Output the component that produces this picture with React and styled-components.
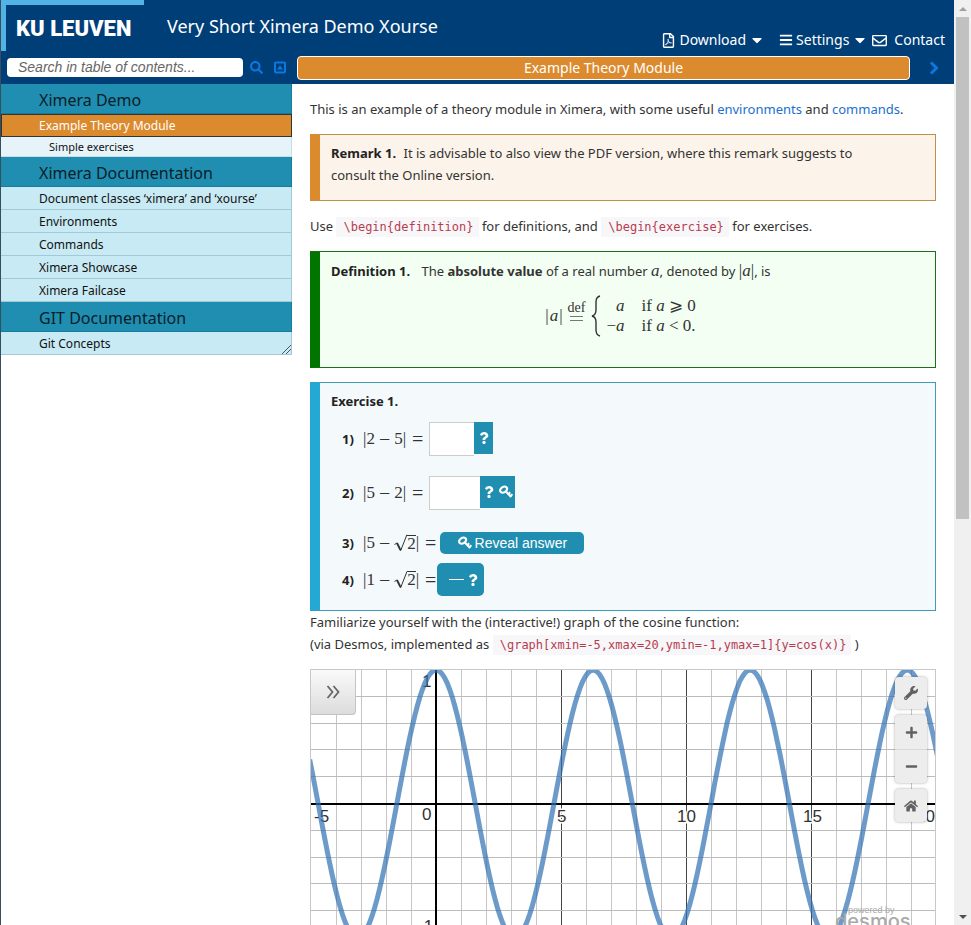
import React from "react";
import styled, { createGlobalStyle } from "styled-components";
import {
  FaRegFilePdf,
  FaBars,
  FaCaretDown,
  FaRegEnvelope,
  FaSearch,
  FaQuestion,
  FaWrench,
  FaPlus,
  FaMinus,
  FaHome,
} from "react-icons/fa";

const sans = '"Noto Sans", "Open Sans", sans-serif';
const arial = '"Liberation Sans", Arial, sans-serif';
const serif = '"Liberation Serif", "Times New Roman", serif';

const GlobalStyle = createGlobalStyle`
  * { box-sizing: border-box; }
  body { margin: 0; background: #fff; color: #333; font: 13px/22px ${sans}; }
  button { border: 0; margin: 0; padding: 0; cursor: pointer; }
  p, h1, h2, ul, ol { margin: 0; padding: 0; }
`;

const Window = styled.div`
  display: flex;
  height: 100vh;
  overflow: hidden;
  border-left: 1px solid #35505c;
`;
const Page = styled.div`
  flex: 1;
  min-width: 0;
`;
const Scrollbar = styled.div`
  width: 17px;
  flex: none;
  display: flex;
  flex-direction: column;
  align-items: center;
  justify-content: space-between;
  background: #f0f0f0;
  padding: 7px 0 6px;
`;
const Thumb = styled.div`
  width: 13px;
  flex: 0 0 55%;
  margin: 6px 0 auto;
  background: #c1c1c1;
`;
const Arrow = styled.svg`
  width: 8px;
  height: 4px;
  flex: none;
  fill: ${(p) => p.$color};
`;

const Header = styled.header`
  height: 84px;
  background: #003e78;
  color: #fff;
  display: flex;
  flex-direction: column;
`;
const TopRow = styled.div`
  height: 51px;
  display: flex;
`;
const Logo = styled.div`
  width: 143px;
  border-top: 5px solid #52b4e6;
  border-left: 5px solid #52b4e6;
  padding: 12px 0 0 10px;
  font: 900 22px/24px Roboto, sans-serif;
  white-space: nowrap;
`;
const Title = styled.h1`
  font: 400 18px/24px ${sans};
  padding: 14px 0 0 23px;
  flex: 1;
  white-space: nowrap;
`;
const Menu = styled.nav`
  display: flex;
  align-items: center;
  align-self: flex-end;
  padding-right: 9px;
  font-size: 14px;
  line-height: 22px;
`;
const MenuButton = styled.button`
  display: flex;
  align-items: center;
  gap: 3px;
  margin-right: ${(p) => p.$after}px;
  background: none;
  color: #fff;
  font: inherit;
`;
const MenuLink = styled.a`
  display: flex;
  align-items: center;
  gap: 7px;
  color: #fff;
  text-decoration: none;
`;
const BarRow = styled.div`
  display: flex;
  align-items: center;
  height: 33px;
  padding-left: 6px;
`;
const Search = styled.input`
  width: 236px;
  height: 19px;
  border: 0;
  border-radius: 4px;
  padding: 0 11px;
  font: italic 14px/19px ${arial};
  &::placeholder { color: #666; opacity: 1; }
`;
const IconButton = styled.button`
  display: flex;
  justify-content: center;
  width: 24px;
  background: none;
  color: #0a78e0;
`;
const SearchTools = styled.div`
  display: flex;
  width: 54px;
  padding-left: 1px;
`;
const Current = styled.button`
  flex: 1;
  height: 24px;
  border: 1px solid #fff;
  border-radius: 4px;
  background: #dc8a2e;
  color: #fff;
  font: 14px/20px ${sans};
`;
const NextWrap = styled.div`
  width: 44px;
  padding-left: 12px;
`;

const Body = styled.div`
  display: flex;
  align-items: flex-start;
`;
const Sidebar = styled.nav`
  position: relative;
  width: 291px;
  flex: none;
`;
const tocStyles = {
  part: { bg: "#1f8eb1", color: "#0b2029", size: 16, height: 30, line: 32, pad: 38, edge: "#177b9b" },
  active: { bg: "#dc8a2e", color: "#fff", size: 12, height: 23, line: 22, pad: 37, edge: "#333" },
  sub: { bg: "#e6f4fa", color: "#111", size: 11, height: 20, line: 20, pad: 48, edge: "#c5dfe8" },
  item: { bg: "#c8eaf4", color: "#111", size: 12, height: 23, line: 24, pad: 38, edge: "#a5c9d4" },
};
const TocLink = styled.a`
  display: block;
  height: ${(p) => tocStyles[p.$kind].height}px;
  padding-left: ${(p) => tocStyles[p.$kind].pad}px;
  background: ${(p) => tocStyles[p.$kind].bg};
  color: ${(p) => tocStyles[p.$kind].color};
  font-size: ${(p) => tocStyles[p.$kind].size}px;
  line-height: ${(p) => tocStyles[p.$kind].line}px;
  border: 0 solid ${(p) => tocStyles[p.$kind].edge};
  border-width: ${(p) => (p.$kind === "active" ? "1px" : "0 1px 1px 0")};
  text-decoration: none;
  white-space: nowrap;
`;
const Grip = styled.svg`
  position: absolute;
  right: 1px;
  bottom: 1px;
  width: 9px;
  height: 9px;
  stroke: #555;
`;

const Main = styled.main`
  flex: 1;
  min-width: 0;
  padding: 14px 18px 0;
`;
const Link = styled.a`
  color: #1b6fd0;
  text-decoration: none;
`;
const Code = styled.code`
  padding: 3px 5px 3px 7px;
  background: #f7f7f9;
  color: #b83c50;
  font: 12px/16px "DejaVu Sans Mono", monospace;
`;
const tones = {
  remark: { main: "#dc8a2e", line: "#c08e48", bg: "#fcf3ea" },
  definition: { main: "#007500", line: "#1c701c", bg: "#f2fff2" },
  exercise: { main: "#23a9d4", line: "#3c9cbc", bg: "#f4f9fc" },
};
const Box = styled.section`
  border: 1px solid ${(p) => tones[p.$tone].line};
  border-left: 10px solid ${(p) => tones[p.$tone].main};
  background: ${(p) => tones[p.$tone].bg};
  padding: ${(p) => p.$top}px 11px ${(p) => p.$bottom}px;
  margin-top: 14px;
`;
const Remark = styled.p`
  padding-right: 48px;
`;
const Lead = styled.b`
  color: #222;
  margin-right: ${(p) => p.$after || 4}px;
`;
const Para = styled.p`
  margin-top: ${(p) => p.$gap || 0}px;
`;

const Formula = styled.span`
  display: inline-flex;
  align-items: center;
  font: 17px/22px ${serif};
  color: #333;
  white-space: nowrap;
`;
const Var = styled.i`
  font-family: ${serif};
  font-size: 17px;
  line-height: 20px;
`;
const Minus = styled.span`
  margin: 0 4px;
  font-size: 20px;
`;
const Equals = styled.span`
  margin-left: 6px;
  font-size: 20px;
`;
const Display = styled.div`
  display: flex;
  justify-content: center;
  align-items: center;
  height: 44px;
  margin-top: 12px;
  padding-right: 14px;
  font: 17px/20px ${serif};
`;
const Modulus = styled.span`
  display: flex;
  gap: 1px;
`;
const DefEq = styled.span`
  display: flex;
  flex-direction: column;
  align-items: center;
  margin: 0 6px 0 5px;
  font-size: 14px;
  line-height: 10px;
  padding-bottom: 8px;
`;
const EqLines = styled.span`
  width: 13px;
  height: 5px;
  margin-top: 3px;
  border: solid #777;
  border-width: 1px 0;
`;
const Brace = styled.svg`
  width: 10px;
  height: 42px;
  margin-right: 5px;
  fill: none;
  stroke: #333;
  stroke-width: 1.4;
`;
const Cases = styled.span`
  display: grid;
  grid-template-columns: auto auto;
  column-gap: 17px;
  & > :nth-child(odd) { text-align: right; }
`;
const RadicalSvg = styled.svg`
  width: 13px;
  height: 18px;
  fill: none;
  stroke: #333;
`;
const Radicand = styled.span`
  border-top: 1px solid #333;
  line-height: 16px;
  height: 17px;
`;

const Questions = styled.ol`
  list-style: none;
  padding-left: 11px;
`;
const Question = styled.li`
  display: flex;
  align-items: center;
  height: ${(p) => p.$height}px;
`;
const Num = styled.b`
  width: 21px;
  color: #222;
`;
const AnswerGroup = styled.span`
  display: flex;
  align-items: flex-start;
  margin-left: 6px;
`;
const Answer = styled.input`
  width: ${(p) => p.$width}px;
  height: 34px;
  border: 1px solid #ccc;
  border-right: 0;
  background: #fff;
`;
const Check = styled.button`
  display: flex;
  align-items: center;
  justify-content: center;
  gap: 4px;
  width: ${(p) => p.$width}px;
  height: 32px;
  background: #1f8eb1;
  color: #fff;
`;
const RoundButton = styled(Check)`
  height: ${(p) => p.$height}px;
  margin-left: ${(p) => p.$before}px;
  padding-left: ${(p) => p.$pad || 0}px;
  border-radius: 5px;
  gap: 3px;
  font: 14px/20px ${arial};
`;
const Dash = styled.span`
  width: 15px;
  height: 1px;
  background: #fff;
`;
const KeySvg = styled.svg`
  width: 14px;
  height: 14px;
`;

const Graph = styled.figure`
  position: relative;
  margin: 14px 0 0;
  border: 1px solid #c8c8c8;
  overflow: hidden;
`;
const Plot = styled.svg`
  display: block;
  width: 100%;
  font: 17px ${arial};
`;
const Expand = styled.button`
  position: absolute;
  left: 0;
  top: 0;
  width: 45px;
  height: 45px;
  border: solid #c4c4c4;
  border-width: 0 1px 1px 0;
  border-radius: 0 0 4px 0;
  background: linear-gradient(#fafafa, #dcdcdc);
  display: flex;
  align-items: center;
  justify-content: center;
`;
const Tools = styled.div`
  position: absolute;
  right: 8px;
  top: 7px;
  display: flex;
  flex-direction: column;
  gap: 6px;
`;
const ToolGroup = styled.div`
  border-radius: 4px;
  background: #ededed;
  box-shadow: 0 0 3px rgba(0, 0, 0, 0.35);
`;
const Tool = styled.button`
  display: flex;
  align-items: center;
  justify-content: center;
  width: 32px;
  height: ${(p) => p.$height}px;
  background: none;
  color: #616161;
  & + & { border-top: 1px solid #d8d8d8; }
`;

const Key = () => (
  <KeySvg viewBox="0 0 14 14" fill="none" stroke="#fff">
    <ellipse cx="4.6" cy="4.6" rx="3.7" ry="2.7" strokeWidth="2.2" transform="rotate(-32 4.6 4.6)" />
    <path d="M6.6 6.3 12.2 12" strokeWidth="2.2" />
    <path d="M9 9.4l2.2-2.2M11 11.6l2.4-2.4" strokeWidth="2" />
  </KeySvg>
);

const CollapseIcon = () => (
  <svg width="12" height="13" viewBox="0 0 12 13" fill="none" stroke="currentColor" strokeWidth="2">
    <rect x="1" y="1.5" width="10" height="10" rx="1" />
    <path d="M6 4.2 9 8.4H3z" fill="currentColor" stroke="none" />
  </svg>
);

const NextIcon = () => (
  <svg width="10" height="14" viewBox="0 0 10 14" fill="none" stroke="currentColor" strokeWidth="3">
    <path d="M2 1.5 7.5 7 2 12.5" />
  </svg>
);

const Root = () => (
  <>
    <RadicalSvg viewBox="0 0 13 18">
      <path d="M.5 10.5 3 9" />
      <path d="M3 9 6.5 16.2" strokeWidth="1.9" />
      <path d="M6.5 17 13 .5" />
    </RadicalSvg>
    <Radicand>2</Radicand>
  </>
);

const Abs = ({ a, b }) => (
  <Formula>
    |{a}<Minus>−</Minus>{b}|<Equals>=</Equals>
  </Formula>
);

const toc = [
  ["part", "Ximera Demo"],
  ["active", "Example Theory Module"],
  ["sub", "Simple exercises"],
  ["part", "Ximera Documentation"],
  ["item", "Document classes ‘ximera’ and ‘xourse’"],
  ["item", "Environments"],
  ["item", "Commands"],
  ["item", "Ximera Showcase"],
  ["item", "Ximera Failcase"],
  ["part", "GIT Documentation"],
  ["item", "Git Concepts"],
];

const UNIT = 25;
const X0 = 125;
const Y0 = 134;
const AMP = 134;
const curve = Array.from({ length: 252 }, (_, i) => {
  const x = -5.05 + i * 0.1;
  return `${(X0 + x * UNIT).toFixed(1)},${(Y0 - Math.cos(x) * AMP).toFixed(1)}`;
}).join(" ");
const columns = Array.from({ length: 24 }, (_, i) => i - 4);
const rows = [-5, -4, -3, -2, -1, 1, 2, 3, 4, 5];

function CosineGraph() {
  return (
    <Graph>
      <Plot viewBox="0 0 624 268" role="img" aria-label="Graph of the cosine function">
        {columns.map((n) => (
          <path
            key={n}
            d={`M${X0 + n * UNIT + 0.5} 0V268`}
            stroke={n % 5 === 0 ? "#444" : "#c6c6c6"}
          />
        ))}
        {rows.map((n) => (
          <path key={n} d={`M0 ${Math.round(Y0 - (n * AMP) / 5) - 0.5}H624`} stroke="#bcbcbc" />
        ))}
        <path d={`M0 ${Y0}H624M${X0} 0V268`} stroke="#000" strokeWidth="2" />
        <g fill="#333" stroke="#fff" strokeWidth="3" paintOrder="stroke">
          <text x="3" y="152">-5</text>
          <text x="111" y="150">0</text>
          <text x="246" y="152">5</text>
          <text x="366" y="152">10</text>
          <text x="492" y="152">15</text>
          <text x="605" y="152">20</text>
          <text x="111" y="17">1</text>
          <text x="107" y="262">-1</text>
        </g>
        <polyline points={curve} fill="none" stroke="#2d70b3" strokeOpacity="0.7" strokeWidth="5" />
        <g fill="#aaa">
          <text x="537" y="243" fontSize="9">powered by</text>
          <text x="524" y="258" fontSize="20" fontWeight="500" fontFamily="Inter, sans-serif">desmos</text>
        </g>
      </Plot>
      <Expand aria-label="Show expression list">
        <svg width="14" height="14" viewBox="0 0 14 14" fill="none" stroke="#666" strokeWidth="1.8">
          <path d="M1.5 1 6.5 7l-5 6M7.5 1l5 6-5 6" />
        </svg>
      </Expand>
      <Tools>
        <ToolGroup>
          <Tool $height={32} aria-label="Graph settings"><FaWrench size={14} /></Tool>
        </ToolGroup>
        <ToolGroup>
          <Tool $height={34} aria-label="Zoom in"><FaPlus size={13} /></Tool>
          <Tool $height={34} aria-label="Zoom out"><FaMinus size={13} /></Tool>
        </ToolGroup>
        <ToolGroup>
          <Tool $height={33} aria-label="Default viewport"><FaHome size={14} /></Tool>
        </ToolGroup>
      </Tools>
    </Graph>
  );
}

export default function App() {
  return (
    <Window>
      <GlobalStyle />
      <Page>
        <Header>
          <TopRow>
            <Logo>KU LEUVEN</Logo>
            <Title>Very Short Ximera Demo Xourse</Title>
            <Menu>
              <MenuButton $after={14}>
                <FaRegFilePdf size={15} />Download<FaCaretDown size={16} />
              </MenuButton>
              <MenuButton $after={4}>
                <FaBars size={14} />Settings<FaCaretDown size={16} />
              </MenuButton>
              <MenuLink href="#contact"><FaRegEnvelope size={15} />Contact</MenuLink>
            </Menu>
          </TopRow>
          <BarRow>
            <Search type="search" aria-label="Search in table of contents" placeholder="Search in table of contents..." />
            <SearchTools>
              <IconButton aria-label="Search"><FaSearch size={13} /></IconButton>
              <IconButton aria-label="Collapse contents"><CollapseIcon /></IconButton>
            </SearchTools>
            <Current>Example Theory Module</Current>
            <NextWrap>
              <IconButton aria-label="Next page"><NextIcon /></IconButton>
            </NextWrap>
          </BarRow>
        </Header>
        <Body>
          <Sidebar aria-label="Table of contents">
            {toc.map(([kind, label]) => (
              <TocLink key={label} $kind={kind} href="#toc">{label}</TocLink>
            ))}
            <Grip viewBox="0 0 9 9"><path d="M0 9 9 0M4 9l5-5" /></Grip>
          </Sidebar>
          <Main>
            <Para>
              This is an example of a theory module in Ximera, with some useful{" "}
              <Link href="#environments">environments</Link> and <Link href="#commands">commands</Link>.
            </Para>
            <Box $tone="remark" $top={7} $bottom={14}>
              <Remark>
                <Lead>Remark 1.</Lead> It is advisable to also view the PDF version, where this remark suggests to consult the Online version.
              </Remark>
            </Box>
            <Para $gap={14}>
              Use <Code>{"\\begin{definition}"}</Code> for definitions, and <Code>{"\\begin{exercise}"}</Code> for exercises.
            </Para>
            <Box $tone="definition" $top={8} $bottom={29}>
              <p>
                <Lead $after={8}>Definition 1.</Lead> The <b>absolute value</b> of a real number <Var>a</Var>, denoted by <Formula>|<i>a</i>|</Formula>, is
              </p>
              <Display>
                <Modulus>|<i>a</i>|</Modulus>
                <DefEq>def<EqLines /></DefEq>
                <Brace viewBox="0 0 10 42">
                  <path d="M9 1Q5 2 5 7v8q0 5-4 6 4 1 4 6v8q0 5 4 6" />
                </Brace>
                <Cases>
                  <i>a</i><span>if <i>a</i> ⩾ 0</span>
                  <span>−<i>a</i></span><span>if <i>a</i> &lt; 0.</span>
                </Cases>
              </Display>
            </Box>
            <Box $tone="exercise" $top={7} $bottom={17}>
              <p><Lead>Exercise 1.</Lead></p>
              <Questions>
                <Question $height={54}>
                  <Num>1)</Num><Abs a="2" b="5" />
                  <AnswerGroup>
                    <Answer $width={45} aria-label="Answer 1" />
                    <Check $width={19} aria-label="Check answer 1"><FaQuestion size={12} /></Check>
                  </AnswerGroup>
                </Question>
                <Question $height={54}>
                  <Num>2)</Num><Abs a="5" b="2" />
                  <AnswerGroup>
                    <Answer $width={51} aria-label="Answer 2" />
                    <Check $width={35} aria-label="Check answer 2"><FaQuestion size={12} /><Key /></Check>
                  </AnswerGroup>
                </Question>
                <Question $height={46}>
                  <Num>3)</Num><Abs a="5" b={<Root />} />
                  <RoundButton $width={144} $height={22} $before={4}><Key />Reveal answer</RoundButton>
                </Question>
                <Question $height={27}>
                  <Num>4)</Num><Abs a="1" b={<Root />} />
                  <RoundButton $width={47} $height={33} $before={1} $pad={6} aria-label="Check answer 4"><Dash /><FaQuestion size={12} /></RoundButton>
                </Question>
              </Questions>
            </Box>
            <Para>Familiarize yourself with the (interactive!) graph of the cosine function:</Para>
            <Para>
              (via Desmos, implemented as <Code>{"\\graph[xmin=-5,xmax=20,ymin=-1,ymax=1]{y=cos(x)}"}</Code> )
            </Para>
            <CosineGraph />
          </Main>
        </Body>
      </Page>
      <Scrollbar aria-hidden="true">
        <Arrow $color="#a0a0a0" viewBox="0 0 8 4"><path d="M0 4 4 0l4 4z" /></Arrow>
        <Thumb />
        <Arrow $color="#505050" viewBox="0 0 8 4"><path d="M0 0h8L4 4z" /></Arrow>
      </Scrollbar>
    </Window>
  );
}
